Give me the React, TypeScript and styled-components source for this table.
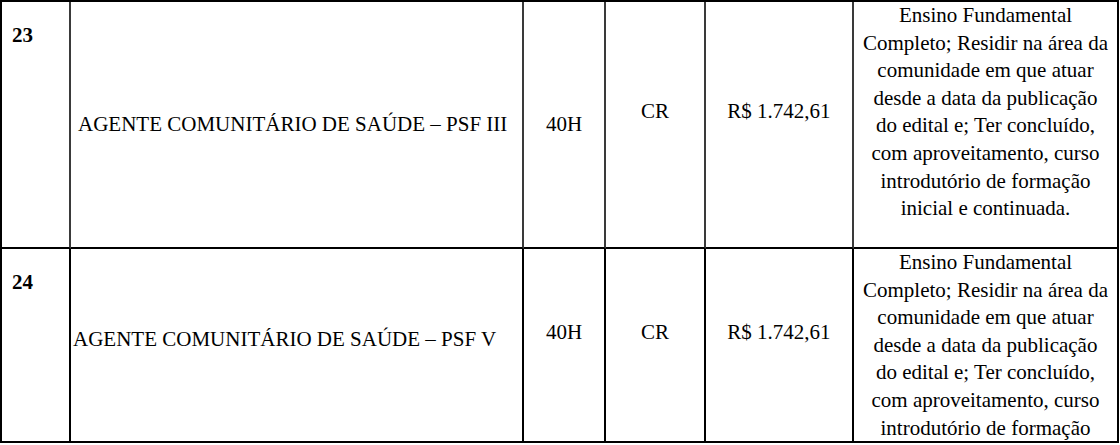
import React from "react";
import styled, { createGlobalStyle } from "styled-components";

const GlobalStyle = createGlobalStyle`
  html, body {
    margin: 0;
    padding: 0;
    background: #fff;
  }
  body {
    font-family: "Liberation Serif", "Times New Roman", serif;
    color: #000;
  }
`;

const Sheet = styled.div`
  display: grid;
  grid-template-columns: 69px 453px 82px 100px 148px 265px;
  grid-auto-rows: auto;
  width: max-content;
  border-top: 2px solid #000;
  border-left: 2px solid #000;
  font-size: 21px;
  line-height: 27.6px;
`;

const Row = styled.div<{ $height: number }>`
  display: contents;
  & > * {
    height: ${(p) => p.$height}px;
  }
`;

const BaseCell = styled.div<{ $soft?: boolean }>`
  box-sizing: border-box;
  display: flex;
  overflow: hidden;
  border-right: 2px solid ${(p) => (p.$soft ? "#3a3a3a" : "#000")};
  border-bottom: 2px solid #000;
`;

const NumberCell = styled(BaseCell)`
  align-items: flex-start;
  padding: 20px 0 0 10px;
  font-weight: 700;
`;

const TitleCell = styled(BaseCell)<{ $indent: number; $offset: number }>`
  align-items: center;
  padding-left: ${(p) => p.$indent}px;
  padding-top: ${(p) => Math.max(0, p.$offset * 2)}px;
  padding-bottom: ${(p) => Math.max(0, -p.$offset * 2)}px;
  white-space: nowrap;
`;

const ValueCell = styled(BaseCell)<{ $offset: number }>`
  align-items: center;
  justify-content: center;
  padding-top: ${(p) => Math.max(0, p.$offset * 2)}px;
  padding-bottom: ${(p) => Math.max(0, -p.$offset * 2)}px;
  white-space: nowrap;
`;

const RequirementCell = styled(BaseCell)<{ $top: number }>`
  flex-direction: column;
  align-items: center;
  padding-top: ${(p) => p.$top}px;
  text-align: center;
`;

const Line = styled.span`
  display: block;
  white-space: nowrap;
`;

const requirementLines = [
  "Ensino Fundamental",
  "Completo; Residir na área da",
  "comunidade em que atuar",
  "desde a data da publicação",
  "do edital e; Ter concluído,",
  "com aproveitamento, curso",
  "introdutório de formação",
  "inicial e continuada.",
];

type Item = {
  num: string;
  title: string;
  height: number;
  soft: boolean;
  indent: number;
  titleOffset: number;
  hoursOffset: number;
  valueOffset: number;
  reqTop: number;
  reqLines: number;
};

const items: Item[] = [
  {
    num: "23",
    title: "AGENTE COMUNITÁRIO DE SAÚDE – PSF III",
    height: 247,
    soft: true,
    indent: 7,
    titleOffset: 0,
    hoursOffset: 0,
    valueOffset: -13,
    reqTop: 0,
    reqLines: 8,
  },
  {
    num: "24",
    title: "AGENTE COMUNITÁRIO DE SAÚDE – PSF V",
    height: 194,
    soft: false,
    indent: 2,
    titleOffset: -5,
    hoursOffset: -12,
    valueOffset: -12,
    reqTop: 0,
    reqLines: 7,
  },
];

export default function App() {
  return (
    <>
      <GlobalStyle />
      <Sheet>
        {items.map((it) => (
          <Row key={it.num} $height={it.height}>
            <NumberCell $soft={it.soft}>{it.num}</NumberCell>
            <TitleCell $soft={it.soft} $indent={it.indent} $offset={it.titleOffset}>
              {it.title}
            </TitleCell>
            <ValueCell $soft={it.soft} $offset={it.hoursOffset}>
              40H
            </ValueCell>
            <ValueCell $soft={it.soft} $offset={it.valueOffset}>
              CR
            </ValueCell>
            <ValueCell $soft={it.soft} $offset={it.valueOffset}>
              R$ 1.742,61
            </ValueCell>
            <RequirementCell $top={it.reqTop}>
              {requirementLines.slice(0, it.reqLines).map((l) => (
                <Line key={l}>{l}</Line>
              ))}
            </RequirementCell>
          </Row>
        ))}
      </Sheet>
    </>
  );
}
